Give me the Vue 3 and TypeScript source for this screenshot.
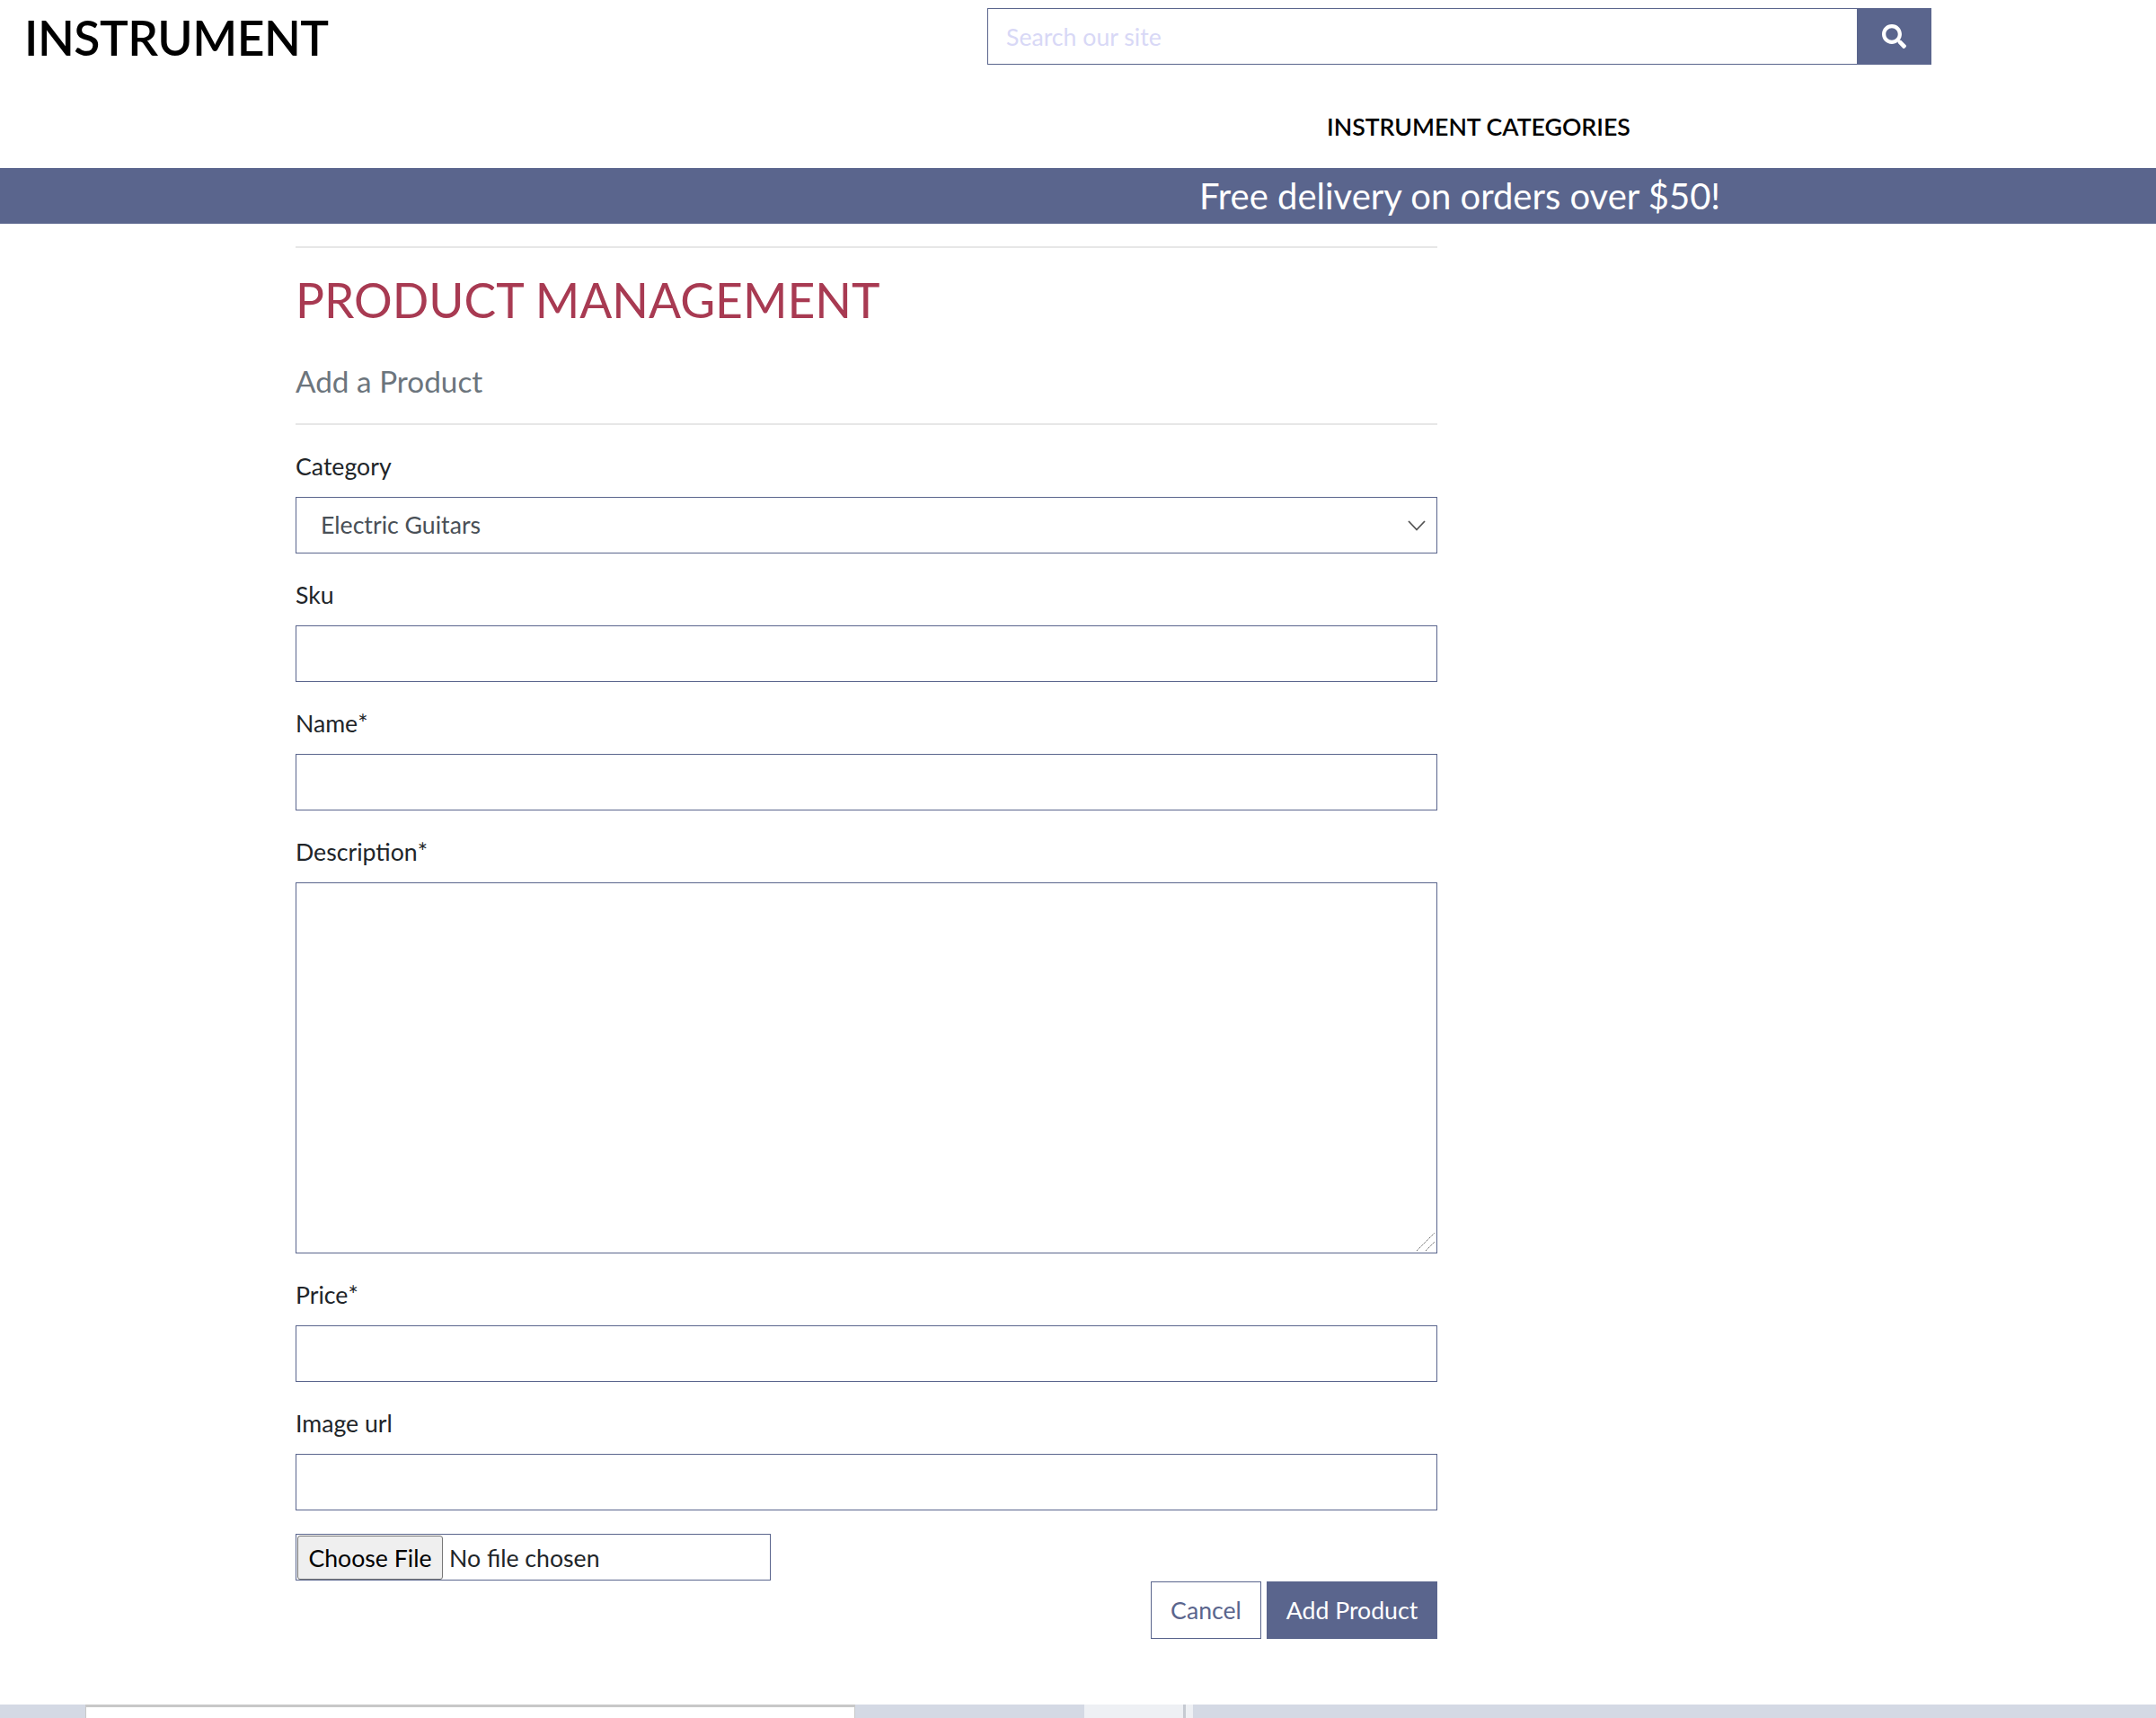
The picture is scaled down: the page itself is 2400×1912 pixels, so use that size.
<template>
  <div class="page">
    <header class="top">
      <a class="logo">INSTRUMENT</a>
      <form class="search" @submit.prevent>
        <input v-model="query" type="text" placeholder="Search our site" />
        <button type="submit" aria-label="Search">
          <svg viewBox="0 0 512 512" width="27" height="27">
            <path fill="#fff" d="M505 442.7L405.3 343c-4.5-4.5-10.6-7-17-7H372c27.6-35.3 44-79.7 44-128C416 93.1 322.9 0 208 0S0 93.1 0 208s93.1 208 208 208c48.3 0 92.7-16.4 128-44v16.3c0 6.4 2.5 12.5 7 17l99.7 99.7c9.4 9.4 24.6 9.4 33.9 0l28.3-28.3c9.4-9.4 9.4-24.6.1-34zM208 336c-70.7 0-128-57.2-128-128 0-70.7 57.2-128 128-128 70.7 0 128 57.2 128 128 0 70.7-57.2 128-128 128z" />
          </svg>
        </button>
      </form>
    </header>
    <nav class="nav"><a>INSTRUMENT CATEGORIES</a></nav>
    <div class="banner">Free delivery on orders over $50!</div>

    <main class="main">
      <hr />
      <h1>PRODUCT MANAGEMENT</h1>
      <h2>Add a Product</h2>
      <hr class="second" />

      <form @submit.prevent>
        <div class="group">
          <label for="category">Category</label>
          <div class="overlay-wrap">
            <select id="category" v-model="category">
              <option v-for="c in categories" :key="c">{{ c }}</option>
            </select>
            <svg class="chevron" viewBox="0 0 20 12" width="20" height="12">
              <path d="M1 1l9 9.500 9-9.500" fill="none" stroke="#555" stroke-width="1.800" />
            </svg>
          </div>
        </div>
        <div v-for="f in beforeText" :key="f.id" class="group">
          <label :for="f.id">{{ f.label }}<sup v-if="f.required">*</sup></label>
          <input :id="f.id" type="text" />
        </div>
        <div class="group">
          <label for="description">Description<sup>*</sup></label>
          <div class="overlay-wrap">
            <textarea id="description"></textarea>
            <svg class="grip" viewBox="0 0 20 20" width="20" height="20">
              <path d="M0 20L20 0M10 20L20 10" fill="none" stroke="#666" stroke-width="1" stroke-dasharray="1.400 0.800" />
            </svg>
          </div>
        </div>
        <div v-for="f in afterText" :key="f.id" class="group">
          <label :for="f.id">{{ f.label }}<sup v-if="f.required">*</sup></label>
          <input :id="f.id" type="text" />
        </div>
        <input class="file" type="file" />
        <div class="actions">
          <button type="button" class="cancel">Cancel</button>
          <button type="submit" class="add">Add Product</button>
        </div>
      </form>
    </main>

    <footer class="strip">
      <div class="panel"></div>
      <div class="tab"></div>
      <div class="tab-edge"></div>
    </footer>
  </div>
</template>

<script setup lang="ts">
import { ref } from 'vue'

interface Field {
  id: string
  label: string
  required?: boolean
}

const query = ref('')
const categories = ['Electric Guitars', 'Acoustic Guitars', 'Drums', 'Keyboards']
const category = ref(categories[0])

const beforeText: Field[] = [
  { id: 'sku', label: 'Sku' },
  { id: 'name', label: 'Name', required: true },
]
const afterText: Field[] = [
  { id: 'price', label: 'Price', required: true },
  { id: 'image', label: 'Image url' },
]
</script>

<style>
html, body { background: #fff; }
</style>

<style scoped>
.page { width: 2400px; height: 1912px; overflow: hidden; display: flex; flex-direction: column; font-family: Lato, sans-serif; font-size: 26.67px; color: #212529; }
.top { display: flex; justify-content: space-between; height: 114px; padding: 9px 250px 0 27px; box-sizing: border-box; }
.logo { font-size: 53.33px; font-weight: 600; letter-spacing: -0.5px; line-height: 64px; color: #000; }
.search { display: flex; width: 1051px; height: 63px; }
.search input[type='text'] { flex: 1; width: auto; min-width: 0; border-right: 0; padding: 0 20px; }
.search input::placeholder { color: #d8d8f6; opacity: 1; }
.search button { width: 83px; border: 0; background: #5a658d; display: flex; align-items: center; justify-content: center; padding: 0; }
.nav { height: 73px; padding-left: 1477px; box-sizing: border-box; }
.nav a { font-size: 26.67px; font-weight: 600; line-height: 54px; color: #000; }
.banner { height: 62px; background: #5a658d; color: #fff; font-size: 40px; line-height: 62px; text-align: center; padding-left: 850px; }
.main { width: 1271px; margin-left: 329px; flex: 1; }
hr { border: 0; height: 2px; background: #e7e7e7; margin: 25px 0 0; }
hr.second { margin: 0 0 27px; }
h1 { margin: 0; padding-top: 24px; font-size: 53.33px; font-weight: 400; line-height: 67px; color: #a83a52; }
h2 { margin: 0; padding: 35px 0 25px; font-size: 33.33px; font-weight: 400; line-height: 44px; color: #6c757d; }
.group { margin-bottom: 27px; }
label { display: block; font-size: 26.67px; line-height: 39px; margin-bottom: 14px; }
sup { font-size: 26.67px; line-height: 0; vertical-align: 0; }
input[type='text'], select, textarea { display: block; width: 100%; height: 63px; box-sizing: border-box; border: 1px solid #5a658d; border-radius: 0; background: #fff; padding: 0 27px; font: 26.67px Lato, sans-serif; color: #495057; outline: 0; }
select { appearance: none; padding-bottom: 2px; }
textarea { height: 413px; resize: none; }
.overlay-wrap { position: relative; }
.chevron { position: absolute; right: 13px; top: 26px; pointer-events: none; }
.grip { position: absolute; right: 3px; bottom: 3px; pointer-events: none; }
.file { display: block; width: 529px; height: 52px; margin-top: -1px; box-sizing: border-box; border: 1px solid #5a658d; font-family: Lato, sans-serif; font-size: 26.67px; color: #212529; padding: 1px; }
.file::file-selector-button { width: 162px; height: 49px; margin: 0 7px 0 0; padding: 0; box-sizing: border-box; border: 1px solid #767676; border-radius: 3px; background: #efefef; color: #000; font-family: Lato, sans-serif; font-size: 26.67px; }
.actions { display: flex; justify-content: flex-end; gap: 6px; margin-top: 1px; }
.actions button { height: 64px; font: 26.67px Lato, sans-serif; padding: 0; border-radius: 0; }
.cancel { width: 123px; background: #fff; color: #5a658d; border: 1px solid #5a658d; }
.add { width: 190px; background: #5a658d; color: #fff; border: 0; }
.strip { height: 15px; flex: none; background: #d4d9e4; position: relative; }
.panel { position: absolute; left: 95px; top: 0; width: 857px; height: 15px; box-sizing: border-box; background: #fff; border: 1px solid #c8c8c8; border-top-width: 3px; border-bottom: 0; }
.tab { position: absolute; left: 1207px; top: 0; width: 110px; height: 15px; background: #eef0f4; }
.tab-edge { position: absolute; left: 1317px; top: 0; width: 11px; height: 15px; box-sizing: border-box; background: #eef0f4; border-left: 3px solid #c6cad2; }
</style>
